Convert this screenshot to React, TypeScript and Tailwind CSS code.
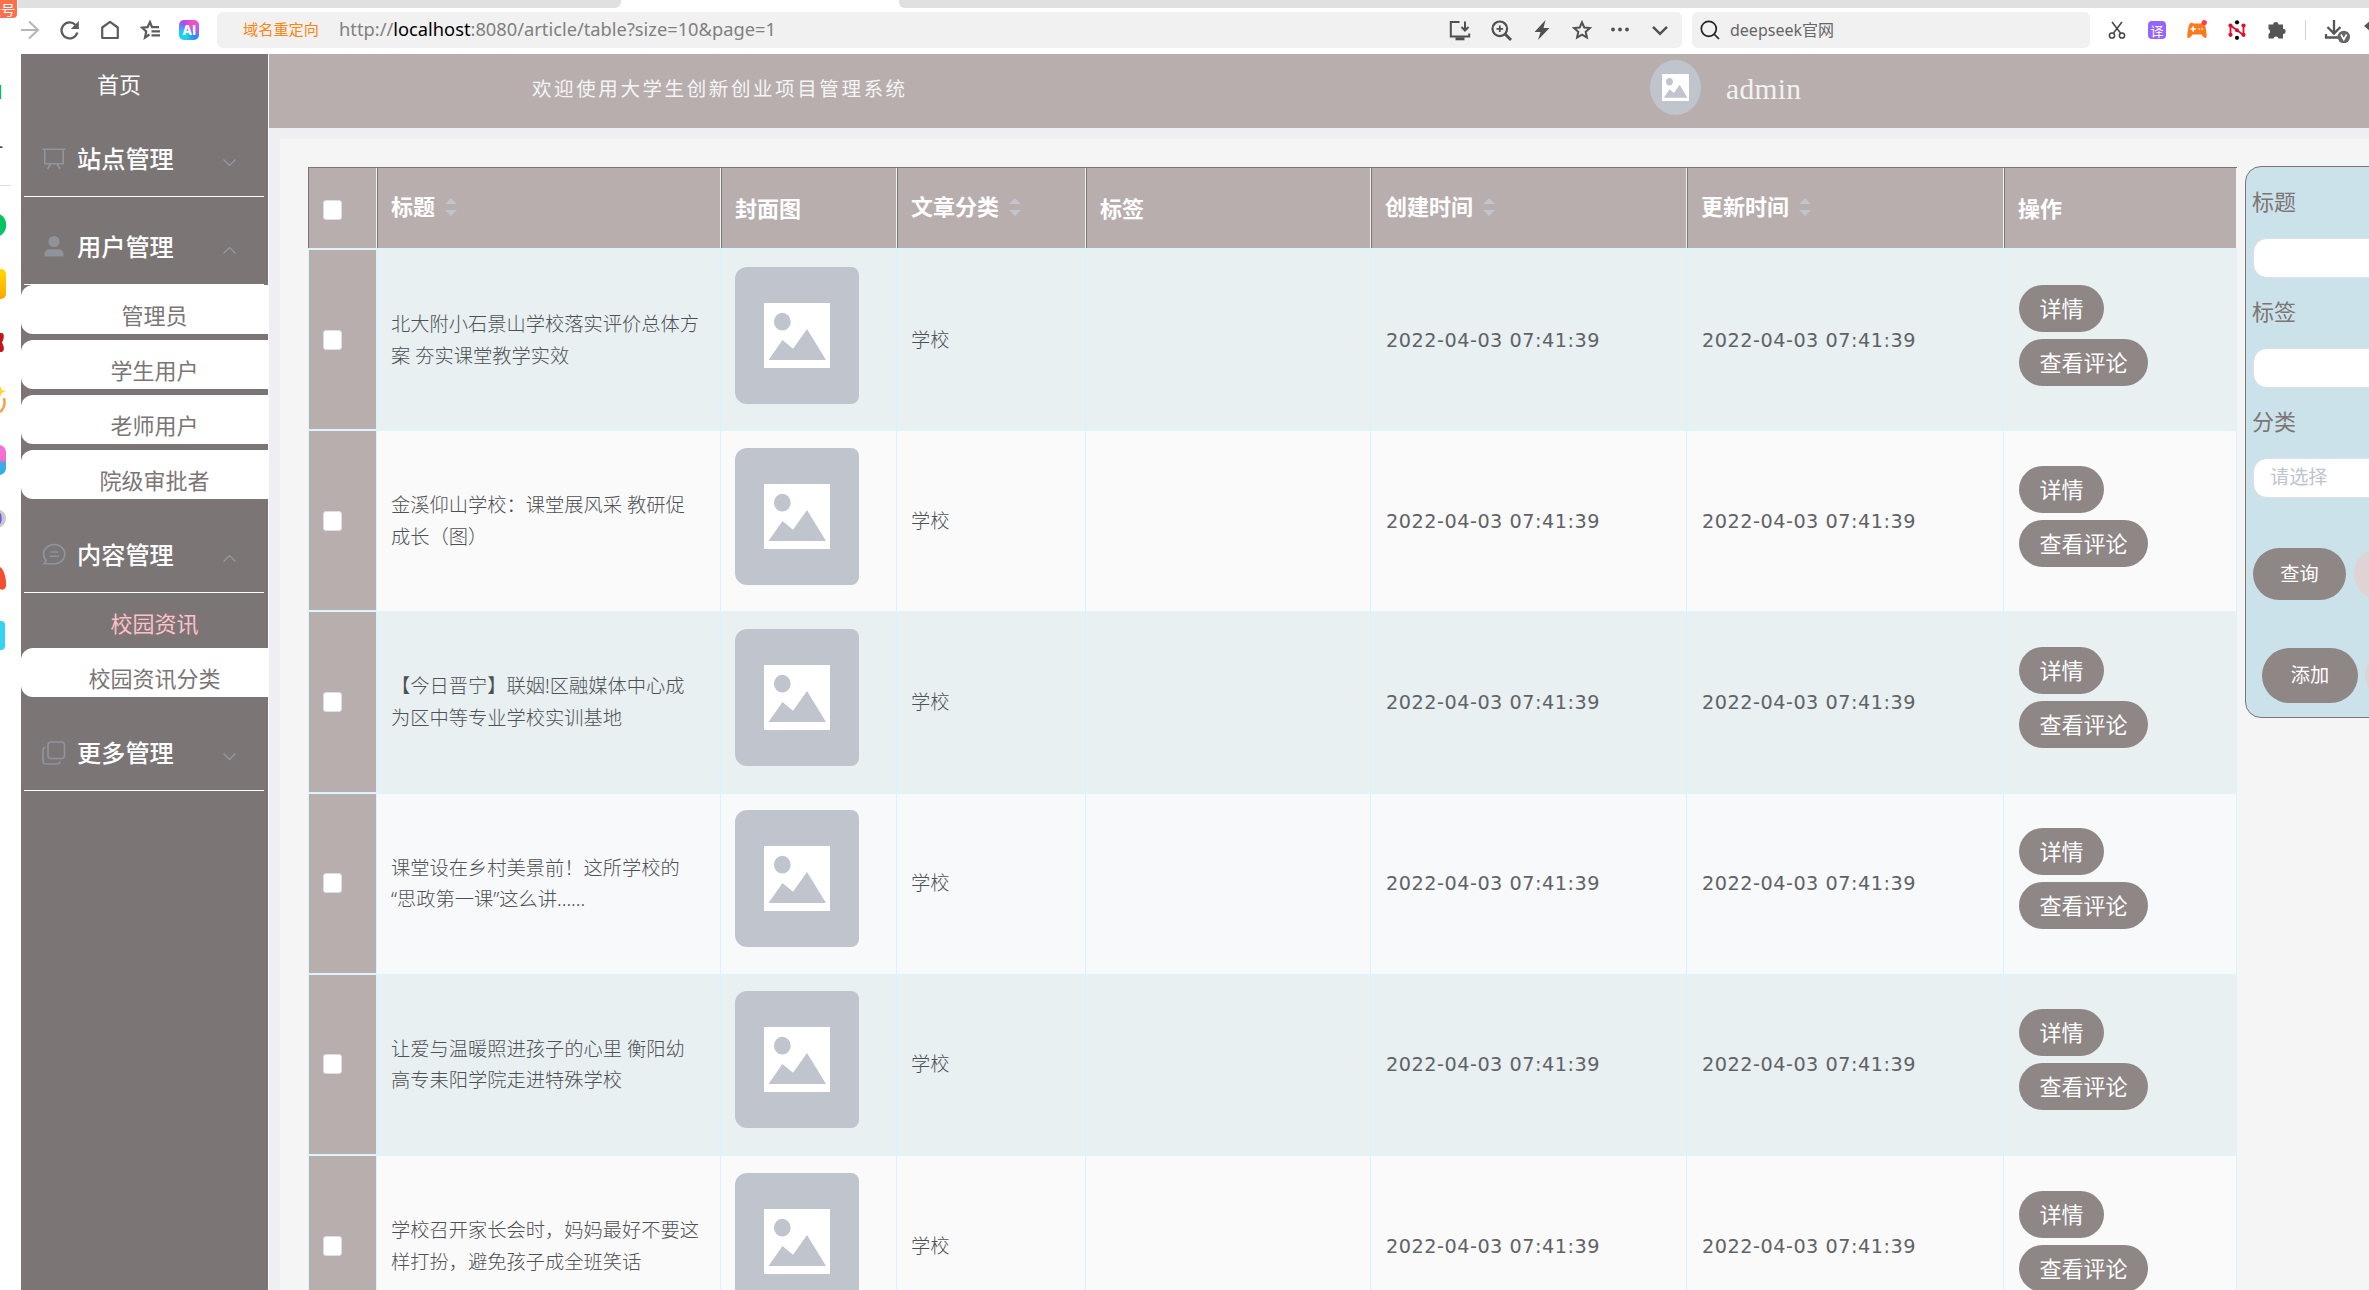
import React from "react";

interface Article {
    title: string[];
    category: string;
    createdAt: string;
    updatedAt: string;
    bg: string;
}

interface MenuGroup {
    name: string;
    icon: React.ReactNode;
    open: boolean;
    items: { name: string; active?: boolean }[];
}

const SANS = "font-['Noto_Sans','Noto_Sans_CJK_SC',sans-serif]";

const COLUMNS = "grid grid-cols-[69px_344px_176px_189px_285px_316px_317px_233px]";

const TIME = "2022-04-03 07:41:39";

const ARTICLES: Article[] = [
    {
        title: ["北大附小石景山学校落实评价总体方", "案 夯实课堂教学实效"],
        category: "学校",
        createdAt: TIME,
        updatedAt: TIME,
        bg: "bg-[#e8f0f2]"
    },
    {
        title: ["金溪仰山学校：课堂展风采 教研促", "成长（图）"],
        category: "学校",
        createdAt: TIME,
        updatedAt: TIME,
        bg: "bg-[#fafafa]"
    },
    {
        title: ["【今日晋宁】联姻!区融媒体中心成", "为区中等专业学校实训基地"],
        category: "学校",
        createdAt: TIME,
        updatedAt: TIME,
        bg: "bg-[#e8f0f2]"
    },
    {
        title: ["课堂设在乡村美景前！这所学校的", "“思政第一课”这么讲......"],
        category: "学校",
        createdAt: TIME,
        updatedAt: TIME,
        bg: "bg-[#f7f9fb]"
    },
    {
        title: ["让爱与温暖照进孩子的心里 衡阳幼", "高专耒阳学院走进特殊学校"],
        category: "学校",
        createdAt: TIME,
        updatedAt: TIME,
        bg: "bg-[#e8f0f2]"
    },
    {
        title: ["学校召开家长会时，妈妈最好不要这", "样打扮，避免孩子成全班笑话"],
        category: "学校",
        createdAt: TIME,
        updatedAt: TIME,
        bg: "bg-[#fafafa]"
    }
];

const MENU: MenuGroup[] = [
    {
        name: "站点管理",
        open: false,
        items: [],
        icon: (
            <svg className="h-6 w-6" viewBox="0 0 24 24" fill="none" stroke="#9094a0" strokeWidth="1.6">
                <path d="M0.5 2.2h23M2.8 2.2v14.6h18.4V2.2M8.5 17l-3 5M15 17l3 5" />
            </svg>
        )
    },
    {
        name: "用户管理",
        open: true,
        items: [{ name: "管理员" }, { name: "学生用户" }, { name: "老师用户" }, { name: "院级审批者" }],
        icon: (
            <svg className="h-6 w-6" viewBox="0 0 24 24" fill="#909399">
                <circle cx="12" cy="6.500" r="5.600" />
                <path d="M2.5 21.500v-2.600a4.600 4.600 0 0 1 4.600-4.600h9.800a4.600 4.600 0 0 1 4.600 4.600v2.600z" />
            </svg>
        )
    },
    {
        name: "内容管理",
        open: true,
        items: [{ name: "校园资讯", active: true }, { name: "校园资讯分类" }],
        icon: (
            <svg className="h-6 w-6" viewBox="0 0 24 24" fill="none" stroke="#9094a0" strokeWidth="1.600">
                <path d="M2 20.700h10.500c6 0 10.300-4.400 10.300-9.600S18.500 1.500 12.300 1.500 1.500 5.900 1.500 11.100c0 2.700 1 5 2.700 6.600zM8.500 9h7.500M7.500 13.200h9.500" />
            </svg>
        )
    },
    {
        name: "更多管理",
        open: false,
        items: [],
        icon: (
            <svg className="h-6 w-6" viewBox="0 0 24 24" fill="none" stroke="#9094a0" strokeWidth="1.600">
                <rect x="6" y="1" width="16.500" height="16.500" rx="3" />
                <path d="M3.500 6.500C2 6.500 1 8 1 9.500V20a3 3 0 0 0 3 3h11c1.600 0 3-.8 3-2.500" />
            </svg>
        )
    }
];

const PictureIcon: React.FC<{ className: string }> = ({ className }) => (
    <svg className={className} viewBox="0 0 66 66" preserveAspectRatio="none">
        <path d="M0 0h66v66H0z" fill="#fff" />
        <ellipse cx="18.300" cy="19" rx="8.400" ry="9" fill="#c0c4cc" />
        <path d="M4.500 58l14-20.500 10.500 9 14-20L62 58z" fill="#c0c4cc" />
    </svg>
);

const Toolbar: React.FC = () => (
    <div className="relative h-[54px] w-full shrink-0 bg-white">
        <div className="flex h-2">
            <div className="ml-[18px] w-[603px] rounded-br-md bg-[#e0e0e0]" />
            <div className="ml-[278px] flex-1 rounded-bl-md bg-[#e0e0e0]" />
        </div>
        <div className="absolute left-0 top-0 flex h-[18px] w-[17px] items-center justify-end overflow-hidden rounded-br-sm bg-[#ff6f4b] pr-0.5">
            <span className="whitespace-nowrap font-['Noto_Sans_CJK_SC',sans-serif] text-[14px] leading-none text-white">
                账号
            </span>
        </div>
        <div className="flex h-11 items-center">
            <div className="flex w-[217px] shrink-0 items-center gap-[20px] pl-[20px]">
                <svg className="h-5 w-5" viewBox="0 0 20 20" fill="none" stroke="#b5b5b5" strokeWidth="2">
                    <path d="M1 10h17M9 1.500l9 8.500-9 8.500" />
                </svg>
                <svg className="h-5 w-5" viewBox="0 0 20 20" fill="none" stroke="#5c5c5c" strokeWidth="2.300">
                    <path d="M17.300 12.500A8 8 0 1 1 15.500 5" />
                    <path d="M18.800 1v8h-8z" fill="#5c5c5c" stroke="none" />
                </svg>
                <svg className="h-5 w-5" viewBox="0 0 20 20" fill="none" stroke="#5c5c5c" strokeWidth="2.200">
                    <path d="M2.200 7.500L10 1.800l7.800 5.700V18H2.200z" strokeLinejoin="round" />
                </svg>
                <svg className="h-5 w-5" viewBox="0 0 20 20" fill="none" stroke="#5c5c5c" strokeWidth="2.200">
                    <path d="M9.500 14.500L5 17.500l1.200-6L2 7.700l5.600-.5L10 2l2 5.200h7" />
                    <path d="M11.500 11.300H20M11.500 15.300H20" />
                </svg>
                <div className="-ml-px flex h-5 w-5 items-center justify-center rounded-[5px] bg-[conic-gradient(from_20deg,#f94dc0,#c05cf0,#2f86ff,#1fd4e8,#20c8f8,#a44df5,#f94dc0)]">
                    <span className="font-['Inter',sans-serif] text-[13px] font-extrabold leading-none text-white">
                        AI
                    </span>
                </div>
            </div>
            <div className="flex h-9 w-[1465px] shrink-0 items-center rounded-md bg-[#f1f1f1] pl-[26px]">
                <span className={`${SANS} w-[96px] text-[15.200px] leading-none text-[#ff8410]`}>域名重定向</span>
                <span className={`${SANS} -mt-px whitespace-nowrap text-[18.300px] leading-none text-[#808080]`}>
                    http://<span className="text-black">localhost</span>:8080/article/table?size=10&amp;page=1
                </span>
                <div className="ml-auto flex items-center gap-[20px] pr-[12px]">
                    <svg className="h-[21px] w-[22px]" viewBox="0 0 22 21" fill="none" stroke="#505050" strokeWidth="2">
                        <path d="M10.500 2H1.800v14.500h18.400v-3" />
                        <path d="M16 1.500v9M12.500 7l3.500 3.500L19.500 7" />
                        <path d="M6.500 18.800h9" strokeWidth="3" />
                    </svg>
                    <svg className="h-[21px] w-[21px]" viewBox="0 0 21 21" fill="none" stroke="#505050" strokeWidth="2.200">
                        <circle cx="8.800" cy="8.800" r="7.300" />
                        <path d="M5.500 8.800h6.600M8.800 5.500v6.600" strokeWidth="1.700" />
                        <path d="M14 14l6 6" strokeWidth="2.800" />
                    </svg>
                    <svg className="h-5 w-5" viewBox="0 0 20 20" fill="#505050">
                        <path d="M13.500 0L2.500 12h6L6 20 17.500 8h-6z" />
                    </svg>
                    <svg className="h-5 w-5" viewBox="0 0 20 20" fill="none" stroke="#505050" strokeWidth="2">
                        <path d="M10 2.300l2.300 5.200 5.600.6-4.200 3.700 1.200 5.700-4.900-2.900-4.900 2.900 1.200-5.700L2.100 8.100l5.600-.6z" />
                    </svg>
                    <svg className="-ml-0.5 h-5 w-5" viewBox="0 0 20 20" fill="#505050">
                        <circle cx="3" cy="9.500" r="1.900" />
                        <circle cx="10" cy="9.500" r="1.900" />
                        <circle cx="17" cy="9.500" r="1.900" />
                    </svg>
                    <svg className="h-5 w-5" viewBox="0 0 20 20" fill="none" stroke="#505050" strokeWidth="2.500">
                        <path d="M3 6.800l7 7 7-7" />
                    </svg>
                </div>
            </div>
            <div className="ml-2.5 flex h-9 w-[398px] shrink-0 items-center rounded-md bg-[#f1f1f1] pl-2">
                <svg className="h-5 w-5" viewBox="0 0 20 20" fill="none" stroke="#222" strokeWidth="1.700">
                    <circle cx="8.800" cy="8.800" r="7.500" />
                    <path d="M14 14l5 5" />
                </svg>
                <span className={`${SANS} ml-[10px] text-[16px] leading-none text-[#666]`}>deepseek官网</span>
            </div>
            <div className="ml-[17px] flex shrink-0 items-center">
                <svg className="h-5 w-5" viewBox="0 0 20 20" fill="none" stroke="#444" strokeWidth="1.500">
                    <path d="M5 2l8.500 11M15 2L6.500 13" />
                    <circle cx="5" cy="15.500" r="2.600" />
                    <circle cx="15" cy="15.500" r="2.600" />
                </svg>
                <div className="ml-[21px] flex h-[18px] w-[18px] items-center justify-center rounded-sm bg-[#9664ff]">
                    <span className="font-['Noto_Sans_CJK_SC',sans-serif] text-[13px] leading-none text-white">译</span>
                </div>
                <svg className="ml-[21px] h-5 w-5" viewBox="0 0 20 20">
                    <path
                        d="M1.500 7C2.300 3 4.500 2 6.500 3.500h7c2-1.500 4.200-.5 5 3.500.8 3.500 1.500 9 1 10.500-.8 1-3.300.2-5-3h-9c-1.700 3.200-4.200 4-5 3C0 16 .700 10.500 1.500 7z"
                        fill="#ff7a1c"
                    />
                    <path d="M4 9h4.400M6.200 6.800v4.400M12 9h.1M15 9h.1" stroke="#fff" strokeWidth="1.600" strokeLinecap="round" />
                    <circle cx="17.300" cy="2.600" r="2.600" fill="#ff3b50" />
                </svg>
                <svg className="ml-[20px] h-5 w-5" viewBox="0 0 20 20">
                    <path d="M3.500 15V5.500l13 9.500V5.500" fill="none" stroke="#e60a2c" strokeWidth="1.800" />
                    <g fill="#e60a2c">
                        <circle cx="3.500" cy="5.500" r="2.100" />
                        <circle cx="3.500" cy="14.800" r="2.100" />
                        <circle cx="16.500" cy="5.500" r="2.100" />
                        <circle cx="16.500" cy="14.800" r="2.100" />
                        <circle cx="10" cy="10.200" r="2" />
                    </g>
                    <circle cx="10" cy="2.300" r="2.100" fill="#000" />
                    <circle cx="10" cy="17.800" r="2.100" fill="#000" />
                </svg>
                <svg className="ml-[20px] h-5 w-5" viewBox="0 0 20 20" fill="#555">
                    <path d="M1.500 4.500h4.700a2.600 2.600 0 1 1 5.200 0H16v4.200a2.600 2.600 0 1 1 0 5.200V18.500h-4.500a2.600 2.600 0 0 0-5 0h-5v-4.600a2.600 2.600 0 0 0 0-4.800z" />
                </svg>
                <div className="ml-[18px] h-5 w-px bg-[#d4d4d4]" />
                <svg className="ml-[18px] h-[26px] w-[27px]" viewBox="0 0 27 26" fill="none" stroke="#555" strokeWidth="2.300">
                    <path d="M10 3v13M3.500 10l6.500 6.500 6.500-6.500M2 17V20.500h12" />
                    <circle cx="19.800" cy="20" r="6.200" fill="#666" stroke="none" />
                    <path d="M17 17.500l2.800 5 2.800-5" stroke="#fff" strokeWidth="1.700" />
                </svg>
                <svg className="-mt-2 ml-[13px] h-5 w-1.5" viewBox="0 0 6 20" fill="#555">
                    <path d="M0 10l6-5v10z" />
                </svg>
            </div>
        </div>
    </div>
);

// Launcher icons, cut off by the window edge
const Dock: React.FC = () => (
    <svg className="h-[660px] w-[21px] shrink-0" viewBox="0 54 21 660">
        <defs>
            <linearGradient id="dockPink" x1="0" y1="0" x2="0" y2="1">
                <stop offset="0" stopColor="#f66fe0" />
                <stop offset="0.500" stopColor="#f070c8" />
                <stop offset="0.600" stopColor="#45a8ea" />
                <stop offset="1" stopColor="#27b2ea" />
            </linearGradient>
            <linearGradient id="dockYellow" x1="0" y1="0" x2="0" y2="1">
                <stop offset="0" stopColor="#ffd800" />
                <stop offset="1" stopColor="#ffa800" />
            </linearGradient>
        </defs>
        <path d="M0 85h1.200v14H0z" fill="#0db864" />
        <path d="M0 146.500h2.500v1.200H0z" fill="#000" />
        <path d="M0 185h11v1H0z" fill="#dedede" />
        <circle cx="-6" cy="225" r="12.300" fill="#05c463" />
        <rect x="-24" y="269" width="30" height="30" rx="5" fill="url(#dockYellow)" />
        <path d="M0 333c3-.5 4.500.5 3.500 6l-1.500 3.500 1.500 3.500c1 4 0 6-3.500 6z" fill="#c3131f" />
        <path d="M0 386l2 4 4 1.500-4 1.500-2 4z" fill="#ffd83a" />
        <path d="M4 398c1.500 6-.5 11-4 14" stroke="#f7a24c" strokeWidth="2.600" fill="none" />
        <rect x="-24" y="445" width="30" height="30" rx="7" fill="url(#dockPink)" />
        <path d="M0 510c4 1 6 5 6 8.500s-2 7-6 9z" fill="#c9c9cc" />
        <path d="M0 513c2 1 2.500 9 0 11z" fill="#7152ee" />
        <path d="M0 567c4 2 6.500 12 6 19-.8 3.500-3 4.500-6 3z" fill="#f4502f" />
        <rect x="-24" y="621" width="29" height="29" rx="4" fill="#35d3ee" />
    </svg>
);

const Sidebar: React.FC = () => (
    <aside className={`${SANS} flex w-[247px] shrink-0 flex-col bg-[#7b7575]`}>
        <div className="h-[55px] pl-[76px] pt-[19px] text-[22px] leading-[22px] text-white">首页</div>
        {MENU.map((group) => (
            <div key={group.name}>
                <div className="mx-[3px] mr-1 flex h-[88px] items-center border-b border-white pl-[18px] pt-[12px]">
                    {group.icon}
                    <span className="ml-[11px] text-[24.200px] font-medium leading-[30px] text-white">{group.name}</span>
                    <svg
                        className="ml-auto mr-[28px] mt-2 h-[7px] w-[13px]"
                        viewBox="0 0 13 7"
                        fill="none"
                        stroke="#9a9ca3"
                        strokeWidth="1.100"
                    >
                        {group.open ? <path d="M.5 6.500l6-6 6 6" /> : <path d="M.5.5l6 6 6-6" />}
                    </svg>
                </div>
                {group.items.map((item) =>
                    item.active ? (
                        <div
                            key={item.name}
                            className="mb-1.5 h-[49px] pl-5 pt-[19px] text-center text-[22px] leading-[22px] text-[#ffc0cb]"
                        >
                            {item.name}
                        </div>
                    ) : (
                        <div
                            key={item.name}
                            className="mb-1.5 h-[49px] rounded-l-xl bg-white pl-5 pt-[19px] text-center text-[22px] leading-[22px] text-[#7b7575]"
                        >
                            {item.name}
                        </div>
                    )
                )}
            </div>
        ))}
    </aside>
);

const Header: React.FC = () => (
    <header className="flex h-[74px] shrink-0 items-center bg-[#b8aeae]">
        <span className="-mt-[7px] ml-[263px] w-[1118px] font-['Kaiti_SC','KaiTi','Noto_Sans_CJK_SC',serif] text-[19.500px] leading-[22px] tracking-[2.600px] text-[#f5f5f5]">
            欢迎使用大学生创新创业项目管理系统
        </span>
        <div className="-mt-[7px] flex h-[55px] w-[51px] items-center justify-center rounded-[50%] bg-[#c0c4cc]">
            <PictureIcon className="h-[27px] w-[27px]" />
        </div>
        <span className="-mt-[5px] ml-[25px] font-['Liberation_Serif',serif] text-[29.500px] leading-[30px] tracking-[0.300px] text-[#f2f2f2]">
            admin
        </span>
    </header>
);

const HeadCell: React.FC<{ name: string; sortable?: boolean }> = ({ name, sortable }) => (
    <div className="flex items-center border-l border-r border-l-[#7b7575] border-r-[#f3f1f4] pb-[3px] pl-[13px] text-[22px] font-bold leading-[30px] text-white">
        <span className={sortable ? "-mt-0.5" : "mt-0.5"}>{name}</span>
        {sortable && (
            <svg className="ml-[10px] h-[18px] w-3" viewBox="0 0 12 18" fill="#c0c4cc">
                <path d="M0 6l6-6 6 6zM0 12h12l-6 6z" />
            </svg>
        )}
    </div>
);

const Checkbox: React.FC = () => (
    <span className="block h-5 w-[19px] rounded-[3px] border border-[#dcdfe6] bg-white" />
);

const ArticleTable: React.FC = () => (
    <div className={`${SANS} w-[1929px] shrink-0`}>
        <div className={`${COLUMNS} h-[81px] border-t border-[#7b7575] bg-[#b8aeae]`}>
            <div className="flex items-center border-l border-r border-l-[#7b7575] border-r-[#f3f1f4] pl-[14px] pt-[3px]">
                <Checkbox />
            </div>
            <HeadCell name="标题" sortable />
            <HeadCell name="封面图" />
            <HeadCell name="文章分类" sortable />
            <HeadCell name="标签" />
            <HeadCell name="创建时间" sortable />
            <HeadCell name="更新时间" sortable />
            <HeadCell name="操作" />
        </div>
        <div className="h-px bg-[#e2f2f7]" />
        {ARTICLES.map((article) => (
            <div
                key={article.title[0]}
                className={`${COLUMNS} ${article.bg} h-[181.200px] border-t border-[#dcf6fd] text-[19.250px] text-[#606266] *:border-r *:border-[#d8f3fc] *:flex *:items-center *:pl-[14px]`}
            >
                <div className="border-b border-l bg-[#b8aeae]">
                    <Checkbox />
                </div>
                <div className="font-light text-[#4e5054]">
                    <p className="-mt-px whitespace-nowrap leading-[31.500px]">
                        {article.title[0]}
                        <br />
                        {article.title[1]}
                    </p>
                </div>
                <div>
                    <div className="-mt-[10px] flex h-[137px] w-[124px] items-center justify-center rounded-l-xl rounded-r-lg bg-[#c0c4cc]">
                        <PictureIcon className="h-[65px] w-[66px]" />
                    </div>
                </div>
                <div className="font-light text-[#4e5054]">{article.category}</div>
                <div />
                <div className="pt-0.5 font-['DejaVu_Sans',sans-serif] tracking-[0.500px]">
                    <span className="ml-px">{article.createdAt}</span>
                </div>
                <div className="pt-0.5 font-['DejaVu_Sans',sans-serif] tracking-[0.500px]">
                    <span className="ml-px">{article.updatedAt}</span>
                </div>
                <div>
                    <div className="-mt-[10px] ml-px flex flex-col items-start gap-[7px] text-[22px] leading-[47px] text-white">
                        <span className="h-[47px] rounded-3xl bg-[#8f8686] px-[20.500px]">详情</span>
                        <span className="h-[47px] rounded-3xl bg-[#8f8686] px-[20.500px]">查看评论</span>
                    </div>
                </div>
            </div>
        ))}
    </div>
);

const Field: React.FC<{ label: string; placeholder?: string }> = ({ label, placeholder }) => (
    <div className="h-[110px] w-[320px] pt-[19px]">
        <div className="-ml-px text-[22px] leading-[30px] text-[#7b7575]">{label}</div>
        <div className="mt-[22px] flex h-10 items-center rounded-[14px] border border-[#dcdfe6] bg-white pb-0.5 pl-4 text-[19.200px] text-[#c0c4cc]">
            {placeholder}
        </div>
    </div>
);

const SearchPanel: React.FC = () => (
    <div
        className={`${SANS} -mt-px ml-2 h-[552px] w-[340px] shrink-0 rounded-2xl border border-[#7b7575] bg-[#cce2ea] pl-[7px]`}
    >
        <Field label="标题" />
        <Field label="标签" />
        <Field label="分类" placeholder="请选择" />
        <div className="mt-[51px] flex gap-2 text-center text-[19.200px] leading-[52px]">
            <span className="h-[52px] w-[93px] rounded-full bg-[#8f8686] text-white">查询</span>
            <span className="h-[52px] w-[93px] rounded-full bg-[#e0d3d3]" />
        </div>
        <div className="mt-[48px] flex gap-[7px] pl-[9px] text-center text-[19.200px] leading-[53px]">
            <span className="h-[55px] w-[96px] rounded-full bg-[#8f8686] text-white">添加</span>
            <span className="h-[55px] w-[96px] rounded-full bg-[#e0d3d3]" />
        </div>
    </div>
);

const App: React.FC = () => {
    return (
        <div className="flex h-[1290px] w-[2369px] flex-col overflow-hidden bg-white">
            <Toolbar />
            <div className="flex min-h-0 flex-1">
                <Dock />
                <Sidebar />
                <div className="ml-px flex min-w-0 flex-1 flex-col overflow-hidden bg-[#efeef3]">
                    <Header />
                    <main className="ml-[11px] mt-[11px] flex min-h-0 flex-1 items-start overflow-hidden bg-[#f5f5f5] pl-7 pt-7">
                        <ArticleTable />
                        <SearchPanel />
                    </main>
                </div>
            </div>
        </div>
    );
};

export default App;
